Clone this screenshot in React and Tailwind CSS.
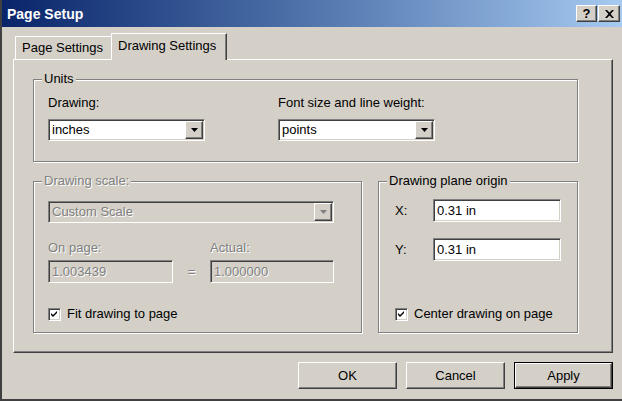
import React from "react";

const sunken =
  "border border-t-[#808080] border-l-[#808080] border-r-white border-b-white shadow-[inset_1px_1px_0_#404040,inset_-1px_-1px_0_#d4d0c8]";
const raised =
  "border border-t-white border-l-white border-r-[#404040] border-b-[#404040] shadow-[inset_-1px_-1px_0_#808080]";
const etched =
  "border border-[#808080] shadow-[1px_1px_0_#fff,inset_1px_1px_0_#fff]";
const disabledText = "text-[#808080] [text-shadow:1px_1px_0_#fff]";

function Arrow({ disabled }) {
  return (
    <svg width="7" height="4" viewBox="0 0 7 4">
      <path d="M0 0H7L3.5 4Z" fill={disabled ? "#808080" : "#000"} />
    </svg>
  );
}

function Dropdown({ value, width, disabled }) {
  return (
    <div className={`flex h-[22px] ${width} ${sunken} p-[1px]`}>
      <div
        className={`flex-1 flex items-center pl-[2px] leading-[16px] ${
          disabled ? `bg-[#d4d0c8] ${disabledText}` : "bg-white text-black"
        }`}
      >
        {value}
      </div>
      <div
        className={`w-[18px] h-full flex items-center justify-center bg-[#d4d0c8] ${raised}`}
      >
        <Arrow disabled={disabled} />
      </div>
    </div>
  );
}

function TextBox({ value, width, disabled }) {
  return (
    <div
      className={`h-[23px] ${width} ${sunken} flex items-center pl-[3px] leading-[16px] ${
        disabled ? `bg-[#d4d0c8] ${disabledText}` : "bg-white text-black"
      }`}
    >
      {value}
    </div>
  );
}

function CheckBox({ label }) {
  return (
    <div className="flex items-center gap-[6px]">
      <div
        className={`w-[13px] h-[13px] bg-white ${sunken} flex items-center justify-center`}
      >
        <svg width="7" height="7" viewBox="0 0 7 7">
          <path d="M0 2L2 4L6 0V2L2 6L0 4Z" fill="#000" />
        </svg>
      </div>
      <span className="leading-[16px]">{label}</span>
    </div>
  );
}

function Group({ title, className, children, disabled }) {
  return (
    <div className={`relative ${etched} ${className}`}>
      <span
        className={`absolute left-[8px] top-[-9px] px-[2px] bg-[#d4d0c8] leading-[16px] ${
          disabled ? disabledText : ""
        }`}
      >
        {title}
      </span>
      {children}
    </div>
  );
}

function Button({ children, isDefault }) {
  const inner = (
    <div
      className={`w-full h-full flex items-center justify-center bg-[#d4d0c8] ${raised}`}
    >
      {children}
    </div>
  );
  if (isDefault) {
    return (
      <div className="w-[99px] h-[27px] border border-black">{inner}</div>
    );
  }
  return <div className="w-[99px] h-[27px]">{inner}</div>;
}

export default function App() {
  return (
    <div
      className="w-[622px] h-[401px] bg-[#d4d0c8] text-[13px] text-black flex flex-col overflow-hidden border-l-2 border-l-[#404040] border-b-2 border-b-[#404040]"
      style={{ fontFamily: '"Liberation Sans", Arial, sans-serif' }}
    >
      {/* Title bar */}
      <div className="h-[27px] flex items-center justify-between pl-[5px] pr-[2px] bg-gradient-to-r from-[#0a246a] to-[#a6caf0]">
        <span className="text-white font-bold text-[14px] leading-[16px]">
          Page Setup
        </span>
        <div className="flex gap-[1px]">
          <div
            className={`w-[21px] h-[17px] bg-[#d4d0c8] ${raised} flex items-center justify-center font-bold text-[13px] leading-none`}
          >
            ?
          </div>
          <div
            className={`w-[22px] h-[17px] bg-[#d4d0c8] ${raised} flex items-center justify-center`}
          >
            <svg width="9" height="8" viewBox="0 0 9 8">
              <path
                d="M0 0H2L4.5 2.6L7 0H9L5.6 4L9 8H7L4.5 5.4L2 8H0L3.4 4Z"
                fill="#000"
              />
            </svg>
          </div>
        </div>
      </div>

      {/* Tabs */}
      <div className="mt-[6px] ml-[11px] flex items-end h-[26px] relative z-10">
        <div className="ml-[2px] h-[23px] w-[98px] border-t border-l border-t-white border-l-white flex items-center pl-[6px] leading-[16px]">
          Page Settings
        </div>
        <div className="-ml-[2px] h-[27px] -mb-[1px] w-[116px] bg-[#d4d0c8] border-t border-l border-r border-t-white border-l-white border-r-[#404040] shadow-[inset_-1px_0_0_#808080] flex items-start pt-[4px] pl-[6px] leading-[16px]">
          Drawing Settings
        </div>
      </div>

      {/* Panel */}
      <div className="ml-[11px] w-[600px] h-[294px] border border-t-white border-l-white border-r-[#404040] border-b-[#404040] shadow-[inset_-1px_-1px_0_#808080] pl-[19px] pt-[19px]">
        <Group title="Units" className="w-[545px] h-[83px] pl-[14px] pt-[15px]">
          <div className="flex">
            <div className="w-[230px]">
              <div className="leading-[16px]">Drawing:</div>
              <div className="mt-[8px]">
                <Dropdown value="inches" width="w-[157px]" />
              </div>
            </div>
            <div>
              <div className="leading-[16px]">Font size and line weight:</div>
              <div className="mt-[8px]">
                <Dropdown value="points" width="w-[157px]" />
              </div>
            </div>
          </div>
        </Group>

        <div className="mt-[19px] flex gap-[16px]">
          <Group
            title="Drawing scale:"
            disabled
            className="w-[329px] h-[152px] pl-[14px] pt-[19px]"
          >
            <Dropdown value="Custom Scale" width="w-[286px]" disabled />
            <div className="mt-[17px] flex items-end">
              <div className="w-[125px]">
                <div className={`leading-[16px] ${disabledText}`}>On page:</div>
                <div className="mt-[4px]">
                  <TextBox value="1.003439" width="w-[125px]" disabled />
                </div>
              </div>
              <div
                className={`w-[37px] h-[23px] flex items-center justify-center ${disabledText}`}
              >
                =
              </div>
              <div>
                <div className={`leading-[16px] ${disabledText}`}>Actual:</div>
                <div className="mt-[4px]">
                  <TextBox value="1.000000" width="w-[124px]" disabled />
                </div>
              </div>
            </div>
            <div className="mt-[23px]">
              <CheckBox label="Fit drawing to page" />
            </div>
          </Group>

          <Group
            title="Drawing plane origin"
            className="w-[200px] h-[152px] pl-[16px] pt-[17px]"
          >
            <div className="flex items-center">
              <span className="w-[38px] leading-[16px]">X:</span>
              <TextBox value="0.31 in" width="w-[128px]" />
            </div>
            <div className="mt-[16px] flex items-center">
              <span className="w-[38px] leading-[16px]">Y:</span>
              <TextBox value="0.31 in" width="w-[128px]" />
            </div>
            <div className="mt-[45px]">
              <CheckBox label="Center drawing on page" />
            </div>
          </Group>
        </div>
      </div>

      {/* Buttons */}
      <div className="mt-[9px] flex justify-end gap-[9px] pr-[9px]">
        <Button>OK</Button>
        <Button>Cancel</Button>
        <Button isDefault>Apply</Button>
      </div>
    </div>
  );
}
